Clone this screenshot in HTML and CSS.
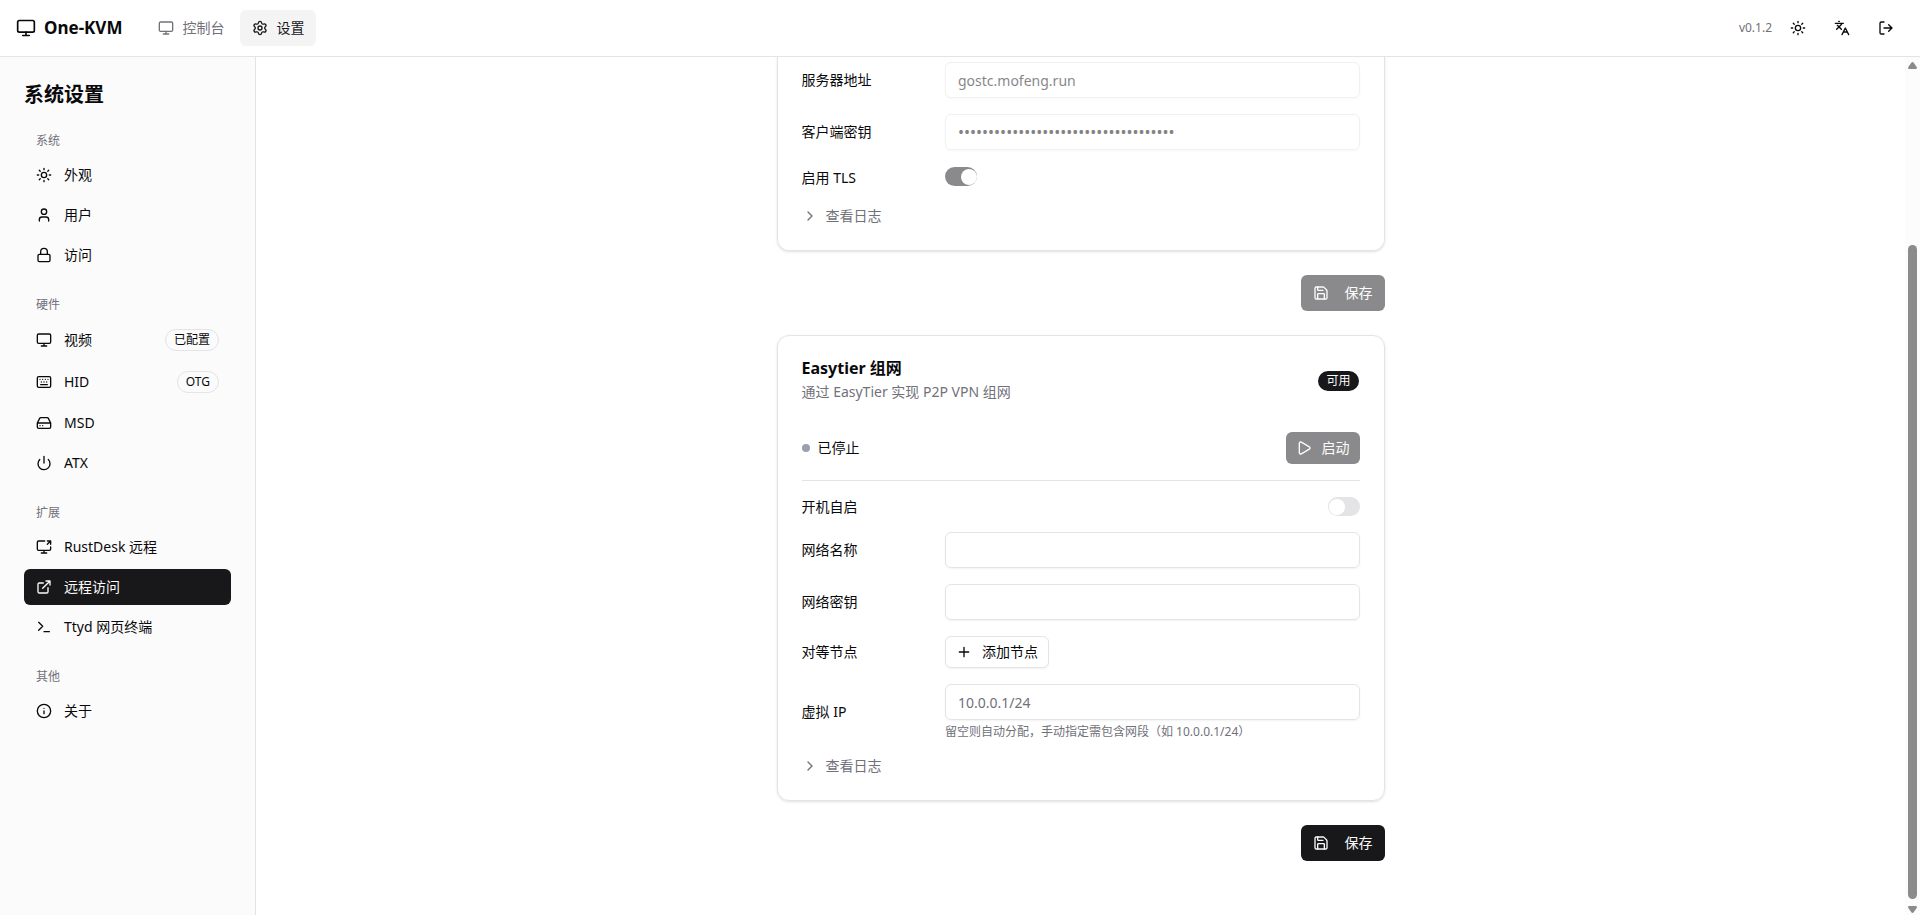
FILE: index.html
```html
<!DOCTYPE html>
<html lang="zh-CN">

	<head>
		<meta charset="utf-8">
		<meta name="viewport" content="width=device-width, initial-scale=1">
		<title>One-KVM</title>
		<link rel="stylesheet" href="styles.css">
	</head>

	<body>

		<!-- Icons -->
		<svg class="sprite" aria-hidden="true">
			<symbol id="i-monitor" viewBox="0 0 24 24"><rect x="2" y="3" width="20" height="14" rx="2"/><path d="M8 21h8M12 17v4"/></symbol>
			<symbol id="i-settings" viewBox="0 0 24 24"><path d="M9.671 4.136a2.34 2.34 0 0 1 4.659 0 2.34 2.34 0 0 0 3.319 1.915 2.34 2.34 0 0 1 2.33 4.033 2.34 2.34 0 0 0 0 3.831 2.34 2.34 0 0 1-2.33 4.033 2.34 2.34 0 0 0-3.319 1.915 2.34 2.34 0 0 1-4.659 0 2.34 2.34 0 0 0-3.32-1.915 2.34 2.34 0 0 1-2.33-4.033 2.34 2.34 0 0 0 0-3.831A2.34 2.34 0 0 1 6.35 6.051a2.34 2.34 0 0 0 3.319-1.915"/><circle cx="12" cy="12" r="3"/></symbol>
			<symbol id="i-sun" viewBox="0 0 24 24"><circle cx="12" cy="12" r="4"/><path d="M12 2v2M12 20v2M4.93 4.93l1.41 1.41M17.66 17.66l1.41 1.41M2 12h2M20 12h2M6.34 17.66l-1.41 1.41M19.07 4.93l-1.41 1.41"/></symbol>
			<symbol id="i-languages" viewBox="0 0 24 24"><path d="m5 8 6 6M4 14l6-6 2-3M2 5h12M7 2h1M22 22l-5-10-5 10M14 18h6"/></symbol>
			<symbol id="i-logout" viewBox="0 0 24 24"><path d="m16 17 5-5-5-5M21 12H9M9 21H5a2 2 0 0 1-2-2V5a2 2 0 0 1 2-2h4"/></symbol>
			<symbol id="i-user" viewBox="0 0 24 24"><path d="M19 21v-2a4 4 0 0 0-4-4H9a4 4 0 0 0-4 4v2"/><circle cx="12" cy="7" r="4"/></symbol>
			<symbol id="i-lock" viewBox="0 0 24 24"><rect x="3" y="11" width="18" height="11" rx="2"/><path d="M7 11V7a5 5 0 0 1 10 0v4"/></symbol>
			<symbol id="i-keyboard" viewBox="0 0 24 24"><path d="M10 8h.01M12 12h.01M14 8h.01M16 12h.01M18 8h.01M6 8h.01M7 16h10M8 12h.01"/><rect x="2" y="4" width="20" height="16" rx="2"/></symbol>
			<symbol id="i-drive" viewBox="0 0 24 24"><path d="M22 12H2M5.45 5.11 2 12v6a2 2 0 0 0 2 2h16a2 2 0 0 0 2-2v-6l-3.45-6.89A2 2 0 0 0 16.76 4H7.24a2 2 0 0 0-1.79 1.11zM6 16h.01M10 16h.01"/></symbol>
			<symbol id="i-power" viewBox="0 0 24 24"><path d="M12 2v10M18.4 6.6a9 9 0 1 1-12.77.04"/></symbol>
			<symbol id="i-share" viewBox="0 0 24 24"><path d="M13 3H4a2 2 0 0 0-2 2v10a2 2 0 0 0 2 2h16a2 2 0 0 0 2-2v-3M8 21h8M12 17v4M17 8l5-5M17 3h5v5"/></symbol>
			<symbol id="i-external" viewBox="0 0 24 24"><path d="M15 3h6v6M10 14 21 3M18 13v6a2 2 0 0 1-2 2H5a2 2 0 0 1-2-2V8a2 2 0 0 1 2-2h6"/></symbol>
			<symbol id="i-terminal" viewBox="0 0 24 24"><path d="M12 19h8M4 17l6-6-6-6"/></symbol>
			<symbol id="i-info" viewBox="0 0 24 24"><circle cx="12" cy="12" r="10"/><path d="M12 16v-4M12 8h.01"/></symbol>
			<symbol id="i-save" viewBox="0 0 24 24"><path d="M15.2 3a2 2 0 0 1 1.4.6l3.8 3.8a2 2 0 0 1 .6 1.4V19a2 2 0 0 1-2 2H5a2 2 0 0 1-2-2V5a2 2 0 0 1 2-2z"/><path d="M17 21v-7a1 1 0 0 0-1-1H8a1 1 0 0 0-1 1v7M7 3v4a1 1 0 0 0 1 1h7"/></symbol>
			<symbol id="i-play" viewBox="0 0 24 24"><path d="M5 5a2 2 0 0 1 3.008-1.728l11.997 6.998a2 2 0 0 1 .003 3.458l-12 7A2 2 0 0 1 5 19z"/></symbol>
			<symbol id="i-plus" viewBox="0 0 24 24"><path d="M5 12h14M12 5v14"/></symbol>
			<symbol id="i-chevron" viewBox="0 0 24 24"><path d="m9 18 6-6-6-6"/></symbol>
		</svg>

		<!-- Top bar -->
		<header class="topbar">
			<a class="brand" href="#"><svg class="icon icon-lg"><use href="#i-monitor"/></svg>One-KVM</a>
			<nav class="topnav">
				<a class="topnav-link" href="#"><svg class="icon"><use href="#i-monitor"/></svg>控制台</a>
				<a class="topnav-link active" href="#"><svg class="icon"><use href="#i-settings"/></svg>设置</a>
			</nav>
			<div class="tools">
				<span class="version">v0.1.2</span>
				<button class="icon-btn" type="button" aria-label="主题"><svg class="icon"><use href="#i-sun"/></svg></button>
				<button class="icon-btn" type="button" aria-label="语言"><svg class="icon"><use href="#i-languages"/></svg></button>
				<button class="icon-btn" type="button" aria-label="退出"><svg class="icon"><use href="#i-logout"/></svg></button>
			</div>
		</header>

		<div class="layout">

			<!-- Sidebar -->
			<aside class="sidebar">
				<h1 class="sidebar-title">系统设置</h1>
				<nav class="menu">
					<section class="menu-group">
						<h2 class="menu-label">系统</h2>
						<a class="menu-item" href="#"><svg class="icon"><use href="#i-sun"/></svg>外观</a>
						<a class="menu-item" href="#"><svg class="icon"><use href="#i-user"/></svg>用户</a>
						<a class="menu-item" href="#"><svg class="icon"><use href="#i-lock"/></svg>访问</a>
					</section>
					<section class="menu-group">
						<h2 class="menu-label">硬件</h2>
						<a class="menu-item" href="#"><svg class="icon"><use href="#i-monitor"/></svg>视频<span class="tag">已配置</span></a>
						<a class="menu-item" href="#"><svg class="icon"><use href="#i-keyboard"/></svg>HID<span class="tag">OTG</span></a>
						<a class="menu-item" href="#"><svg class="icon"><use href="#i-drive"/></svg>MSD</a>
						<a class="menu-item" href="#"><svg class="icon"><use href="#i-power"/></svg>ATX</a>
					</section>
					<section class="menu-group">
						<h2 class="menu-label">扩展</h2>
						<a class="menu-item" href="#"><svg class="icon"><use href="#i-share"/></svg>RustDesk 远程</a>
						<a class="menu-item active" href="#"><svg class="icon"><use href="#i-external"/></svg>远程访问</a>
						<a class="menu-item" href="#"><svg class="icon"><use href="#i-terminal"/></svg>Ttyd 网页终端</a>
					</section>
					<section class="menu-group">
						<h2 class="menu-label">其他</h2>
						<a class="menu-item" href="#"><svg class="icon"><use href="#i-info"/></svg>关于</a>
					</section>
				</nav>
			</aside>

			<!-- Content -->
			<main class="content">
				<div class="panel">

					<section class="card card-continued">
						<div class="field">
							<label for="server">服务器地址</label>
							<div class="control"><input class="input" id="server" type="text" value="gostc.mofeng.run" disabled></div>
						</div>
						<div class="field">
							<label for="clientKey">客户端密钥</label>
							<div class="control"><input class="input" id="clientKey" type="password" value="000000000000000000000000000000000000" disabled></div>
						</div>
						<div class="field field-switch">
							<label for="tls">启用 TLS</label>
							<div class="control"><input class="switch" id="tls" type="checkbox" checked disabled></div>
						</div>
						<button class="log-toggle" type="button"><svg class="icon"><use href="#i-chevron"/></svg>查看日志</button>
					</section>
					<button class="btn btn-save" type="button" disabled><svg class="icon"><use href="#i-save"/></svg>保存</button>

					<section class="card">
						<div class="card-header">
							<div>
								<h3 class="card-title">Easytier 组网</h3>
								<p class="card-desc">通过 EasyTier 实现 P2P VPN 组网</p>
							</div>
							<span class="tag tag-dark">可用</span>
						</div>
						<div class="row">
							<span class="status">已停止</span>
							<button class="btn btn-sm" type="button" disabled><svg class="icon"><use href="#i-play"/></svg>启动</button>
						</div>
						<hr class="separator">
						<div class="row">
							<label for="autostart">开机自启</label>
							<input class="switch" id="autostart" type="checkbox">
						</div>
						<div class="field">
							<label for="netName">网络名称</label>
							<div class="control"><input class="input" id="netName" type="text"></div>
						</div>
						<div class="field">
							<label for="netKey">网络密钥</label>
							<div class="control"><input class="input" id="netKey" type="password"></div>
						</div>
						<div class="field">
							<label for="addPeer">对等节点</label>
							<div class="control"><button class="btn btn-sm btn-outline" id="addPeer" type="button"><svg class="icon"><use href="#i-plus"/></svg>添加节点</button></div>
						</div>
						<div class="field">
							<label for="virtualIp">虚拟 IP</label>
							<div class="control">
								<input class="input" id="virtualIp" type="text" placeholder="10.0.0.1/24">
								<p class="hint">留空则自动分配，手动指定需包含网段（如 10.0.0.1/24）</p>
							</div>
						</div>
						<button class="log-toggle" type="button"><svg class="icon"><use href="#i-chevron"/></svg>查看日志</button>
					</section>
					<button class="btn btn-save" type="button"><svg class="icon"><use href="#i-save"/></svg>保存</button>

				</div>
			</main>

			<!-- Scrollbar -->
			<div class="scrollbar" aria-hidden="true">
				<svg class="arrow" viewBox="0 0 9 7"><path d="M4.500 0Q5.200 0 5.700.8L8.700 5Q9.400 7 8 7H1Q-.4 7 .3 5L3.300.8Q3.800 0 4.500 0z"/></svg>
				<div class="scroll-gap"></div>
				<div class="scroll-thumb"></div>
				<svg class="arrow" viewBox="0 0 9 7"><path d="M4.500 7Q5.200 7 5.700 6.200L8.700 2Q9.400 0 8 0H1Q-.4 0 .3 2L3.300 6.200Q3.800 7 4.500 7z"/></svg>
			</div>

		</div>
	</body>

</html>
```

FILE: styles.css
```css
* {
	box-sizing: border-box;
}

body {
	margin: 0;
	height: 100vh;
	display: flex;
	flex-direction: column;
	overflow: hidden;
	background-color: #fff;
	color: #09090b;
	font-family: "Noto Sans", "Noto Sans CJK SC", sans-serif;
	font-size: 14px;
	line-height: 20px;
}

h1, h2, h3, p {
	margin: 0;
}

a {
	color: inherit;
	text-decoration: none;
}

button, input {
	font: inherit;
	color: inherit;
}

.sprite {
	display: none;
}

.icon {
	width: 16px;
	height: 16px;
	flex: none;
	fill: none;
	stroke: currentColor;
	stroke-width: 2;
	stroke-linecap: round;
	stroke-linejoin: round;
}

.icon-lg {
	width: 20px;
	height: 20px;
}

/* Top bar */
.topbar {
	height: 57px;
	flex: none;
	display: flex;
	align-items: center;
	padding: 0 16px;
	border-bottom: 1px solid #e4e4e7;
}

.brand {
	display: flex;
	align-items: center;
	gap: 8px;
	margin-right: 24px;
	font-size: 17px;
	font-weight: bold;
}

.topnav {
	display: flex;
	gap: 4px;
}

.topnav-link {
	height: 36px;
	display: flex;
	align-items: center;
	gap: 8px;
	padding: 0 12px;
	border-radius: 6px;
	color: #71717a;
}

.topnav-link.active {
	background-color: #f4f4f5;
	color: #18181b;
}

.tools {
	display: flex;
	align-items: center;
	gap: 8px;
	margin-left: auto;
}

.version {
	font-size: 12px;
	color: #71717a;
}

.icon-btn {
	width: 36px;
	height: 36px;
	display: flex;
	align-items: center;
	justify-content: center;
	padding: 0;
	border: 0;
	background: none;
}

/* Sidebar */
.layout {
	flex: 1;
	min-height: 0;
	display: flex;
}

.sidebar {
	width: 256px;
	flex: none;
	padding: 24px;
	background-color: #fbfbfb;
	border-right: 1px solid #e4e4e7;
}

.sidebar-title {
	margin-bottom: 24px;
	font-size: 20px;
	line-height: 28px;
}

.menu {
	display: flex;
	flex-direction: column;
	gap: 24px;
}

.menu-group {
	display: flex;
	flex-direction: column;
	gap: 4px;
}

.menu-label {
	margin-bottom: 4px;
	padding: 0 12px;
	font-size: 12px;
	font-weight: normal;
	line-height: 16px;
	color: #71717a;
}

.menu-item {
	display: flex;
	align-items: center;
	gap: 12px;
	padding: 8px 12px;
	border-radius: 6px;
}

.menu-item.active {
	background-color: #18181b;
	color: #fafafa;
}

.tag {
	margin-left: auto;
	padding: 2px 8px;
	border: 1px solid #e4e4e7;
	border-radius: 11px;
	font-size: 12px;
	line-height: 16px;
}

.tag-dark {
	background-color: #18181b;
	background-clip: padding-box;
	border-color: transparent;
	color: #fafafa;
}

/* Content */
.content {
	flex: 1;
	overflow: hidden;
}

.panel {
	max-width: 672px;
	margin: 0 auto;
	padding: 0 32px;
	display: flex;
	flex-direction: column;
	gap: 24px;
}

.card {
	display: flex;
	flex-direction: column;
	gap: 16px;
	padding: 24px;
	border: 1px solid #e4e4e7;
	border-radius: 12px;
	box-shadow: 0 1px 3px rgba(0, 0, 0, 0.1), 0 1px 2px -1px rgba(0, 0, 0, 0.1);
}

.card-continued {
	padding-top: 5px;
	border-top: 0;
	border-top-left-radius: 0;
	border-top-right-radius: 0;
}

.card-header {
	display: flex;
	align-items: center;
	margin-bottom: 14px;
}

.card-title {
	margin-bottom: 6px;
	font-size: 16px;
	line-height: 16px;
}

.card-desc {
	color: #71717a;
}

.row {
	display: flex;
	align-items: center;
	justify-content: space-between;
}

.row label {
	line-height: 16px;
}

.status {
	display: flex;
	align-items: center;
	gap: 8px;
}

.status::before {
	content: "";
	width: 8px;
	height: 8px;
	border-radius: 50%;
	background-color: #99a1af;
}

.separator {
	width: 100%;
	height: 1px;
	margin: 0;
	border: 0;
	background-color: #e4e4e7;
}

.field {
	display: grid;
	grid-template-columns: repeat(4, 1fr);
	align-items: center;
	column-gap: 16px;
}

.field-switch {
	height: 24px;
}

.control {
	grid-column: span 3;
}

.field-switch .control {
	height: 22px;
}

.input {
	display: block;
	width: 100%;
	height: 36px;
	padding: 4px 12px;
	border: 1px solid #e4e4e7;
	border-radius: 6px;
	background-color: transparent;
	box-shadow: 0 1px 2px rgba(0, 0, 0, 0.05);
}

.input[type='password'] {
	font-size: 16px;
}

.input::placeholder {
	color: #71717a;
}

.input:disabled, .switch:disabled, .btn:disabled {
	opacity: 0.5;
}

.hint {
	margin-top: 4px;
	font-size: 12px;
	line-height: 16px;
	color: #71717a;
}

.switch {
	appearance: none;
	display: flex;
	align-items: center;
	width: 32px;
	height: 19px;
	margin: 0;
	padding: 0 1px;
	border-radius: 10px;
	background-color: #e4e4e7;
}

.switch::before {
	content: "";
	width: 16px;
	height: 16px;
	border-radius: 50%;
	background-color: #fff;
}

.switch:checked {
	justify-content: flex-end;
	padding-right: 0;
	background-color: #18181b;
}

.btn {
	height: 36px;
	display: flex;
	align-items: center;
	gap: 16px;
	padding: 0 12px;
	border: 0;
	border-radius: 6px;
	background-color: #18181b;
	color: #fafafa;
}

.btn-save {
	align-self: flex-end;
}

.btn-sm {
	height: 32px;
	gap: 10px;
	padding: 0 10px;
}

.btn-outline {
	border: 1px solid #e4e4e7;
	background-color: #fff;
	color: #09090b;
	box-shadow: 0 1px 2px rgba(0, 0, 0, 0.05);
}

.log-toggle {
	align-self: flex-start;
	display: flex;
	align-items: center;
	gap: 8px;
	padding: 0;
	border: 0;
	background: none;
	color: #71717a;
}

/* Scrollbar */
.scrollbar {
	width: 15px;
	flex: none;
	display: flex;
	flex-direction: column;
	align-items: center;
	padding: 5px 0 2px;
	background-color: #fcfcfc;
}

.arrow {
	width: 9px;
	height: 7px;
	flex: none;
	fill: #8b8b8b;
}

.scroll-gap {
	flex: 176;
}

.scroll-thumb {
	flex: 654;
	width: 9px;
	margin-bottom: 7px;
	border-radius: 5px;
	background-color: #8b8b8b;
}
```
